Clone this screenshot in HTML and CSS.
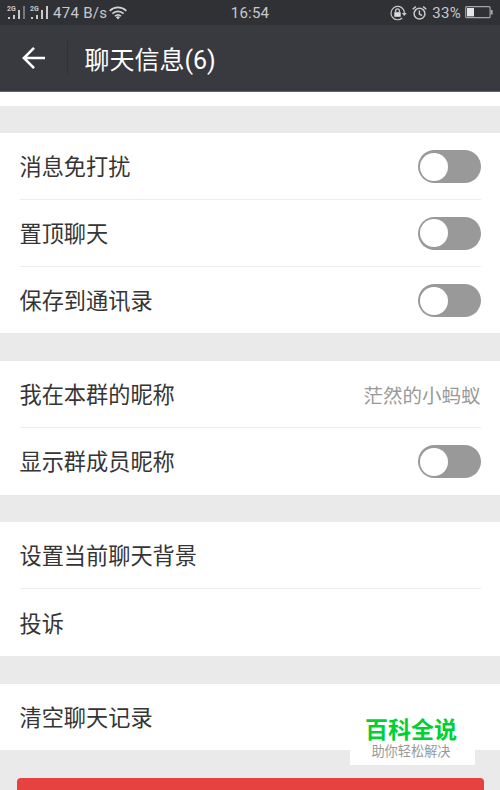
FILE: index.html
```html
<!DOCTYPE html>
<html lang="zh-CN">
<head>
<meta charset="utf-8">
<title>聊天信息</title>
<link rel="stylesheet" href="styles.css">
</head>
<body>
<div class="screen">
  <div class="status">
    <div class="status-left">
      <svg class="signals" width="42" height="16" viewBox="0 0 42 16" fill="#c9c9cb">
        <text class="net" x="0" y="6">2G</text>
        <path d="M1 12h2v2H1zM6 10h2v4H6zM11 5h2v9h-2z"/>
        <path fill="#77787b" d="M16 1h2v13h-2z"/>
        <text class="net" x="23" y="6">2G</text>
        <path d="M24 12h2v2h-2zM29 10h2v4h-2zM34 5h2v9h-2zM39 1h2v13h-2z"/>
      </svg>
      <span class="speed">474 B/s</span>
      <svg class="wifi" width="18" height="14" viewBox="0 0 18 14" fill="none" stroke="#d2d2d4" stroke-width="1.7">
        <path d="M.7 4.8a12 12 0 0 1 16.6 0M3.4 7.6a8 8 0 0 1 11.2 0M6 10.2a4.5 4.5 0 0 1 6 0"/>
        <path d="M7 11.2a3 3 0 0 1 4 0L9 13.4z" fill="#d2d2d4" stroke="none"/>
      </svg>
    </div>
    <span class="clock">16:54</span>
    <div class="status-right">
      <svg width="17" height="16" viewBox="0 0 17 16" fill="none" stroke="#c9c9cb" stroke-width="1.2">
        <path d="M13.3 4.4A6.7 6.7 0 1 0 12.2 13M13.3 4.4a6.7 6.7 0 0 1 1.1 4"/>
        <path d="M11.8 8h5l-2.5 3z" fill="#c9c9cb" stroke="none"/>
        <path d="M4.3 7.2h6.4v4.6H4.3z" fill="#dedee0" stroke="none"/>
        <path d="M5.6 7.5V5.8a1.9 1.9 0 0 1 3.8 0v1.7" stroke-width="1.3"/>
      </svg>
      <svg class="alarm" width="15" height="16" viewBox="0 0 15 16" fill="none" stroke="#c9c9cb" stroke-width="1.5">
        <circle cx="7.5" cy="8.7" r="5.4"/>
        <path d="M.7 4.2 3.8 1.6M14.3 4.2l-3.1-2.6M7.4 5.4v3.7l2.6 1.4"/>
      </svg>
      <span class="percent">33%</span>
      <svg class="battery" width="28" height="13" viewBox="0 0 28 13" fill="none" stroke="#a5a5a8">
        <rect x=".7" y=".7" width="24.4" height="11" rx="1" stroke-width="1.2"/>
        <path d="M2 2h7v8.4H2z" fill="#e6e6e8" stroke="none"/>
        <path d="M25.7 4h2v4.5h-2z" fill="#a5a5a8" stroke="none"/>
      </svg>
    </div>
  </div>
  <header class="bar">
    <svg class="back" width="24" height="24" viewBox="0 0 24 24" fill="none" stroke="#fff" stroke-width="2.6">
      <path d="M23 12H2.4M12 1.8 1.9 12 12 22.2"/>
    </svg>
    <span class="bar-line"></span>
    <h1 class="title">聊天信息(6)</h1>
  </header>
  <div class="tail"></div>
  <section class="group">
    <div class="row"><span class="label">消息免打扰</span><i class="switch"></i></div>
    <div class="row"><span class="label">置顶聊天</span><i class="switch"></i></div>
    <div class="row"><span class="label">保存到通讯录</span><i class="switch"></i></div>
  </section>
  <section class="group">
    <div class="row"><span class="label">我在本群的昵称</span><span class="value">茫然的小蚂蚁</span></div>
    <div class="row"><span class="label">显示群成员昵称</span><i class="switch"></i></div>
  </section>
  <section class="group">
    <div class="row"><span class="label">设置当前聊天背景</span></div>
    <div class="row"><span class="label">投诉</span></div>
  </section>
  <section class="group">
    <div class="row"><span class="label">清空聊天记录</span></div>
  </section>
  <div class="danger"></div>
  <div class="brand">
    <strong class="brand-name">百科全说</strong>
    <span class="brand-sub">助你轻松解决</span>
  </div>
</div>
</body>
</html>
```
FILE: styles.css
```css
* { box-sizing: border-box; }
body {
  margin: 0;
  font-family: Roboto, "Noto Sans CJK SC", sans-serif;
}
.screen {
  position: relative;
  height: 790px;
  overflow: hidden;
  background: #eaeaea;
}
.status {
  display: grid;
  grid-template-columns: 1fr auto 1fr;
  align-items: center;
  height: 25px;
  padding: 1px 7px 0;
  background: #303135;
  color: #c9c9cb;
  font-size: 15px;
  line-height: 24px;
}
.status-left, .status-right { display: flex; align-items: center; }
.status-right { justify-content: flex-end; }
.net { font: bold 7px Roboto, sans-serif; }
.signals { margin-top: -1px; }
.speed { margin-left: 4px; letter-spacing: .3px; }
.wifi { margin: -1px 0 0 2px; }
.clock { letter-spacing: .2px; }
.alarm { margin-left: 5px; }
.percent { margin: 0 4px 0 5px; letter-spacing: .3px; }
.battery { margin-top: -1px; }
.bar {
  display: flex;
  align-items: center;
  height: 67px;
  padding-left: 22px;
  background: #393a3f;
  border-bottom: 1px solid #626267;
}
.bar-line {
  width: 1px;
  height: 34px;
  margin: 0 16.5px 0 21px;
  background: #303135;
}
.title {
  margin: 0;
  padding-top: 5px;
  color: #fff;
  font-size: 25px;
  font-weight: 400;
  line-height: 36px;
}
.tail { height: 13.5px; background: #fff; }
.group { margin-top: 27.8px; background: #fff; }
.row {
  display: flex;
  align-items: center;
  justify-content: space-between;
  height: 66.7px;
  margin: 0 19.5px;
  color: #353535;
  font-size: 22.2px;
}
.row:not(:last-child) { border-bottom: 1px solid #ececec; }
.label { padding-bottom: 1.4px; }
.value { color: #999; font-size: 19.5px; }
.switch {
  width: 63px;
  height: 33.4px;
  margin-top: .8px;
  padding: 2.8px;
  border-radius: 17px;
  background: #999;
}
.switch::before {
  content: "";
  display: block;
  width: 28px;
  height: 28px;
  border-radius: 50%;
  background: #fff;
}
.danger {
  height: 60px;
  margin: 27.8px 16.5px 0;
  border-radius: 4px;
  background: #e64340;
}
.brand {
  position: absolute;
  left: 350px;
  top: 700px;
  display: flex;
  flex-direction: column;
  align-items: center;
  width: 125px;
  height: 65px;
  padding: 17px 3px 0 0;
  background: #fff;
}
.brand-name {
  color: #00d133;
  font-size: 23px;
  font-weight: 700;
  line-height: 27px;
}
.brand-sub { color: #999; font-size: 13.2px; line-height: 16px; }
```
